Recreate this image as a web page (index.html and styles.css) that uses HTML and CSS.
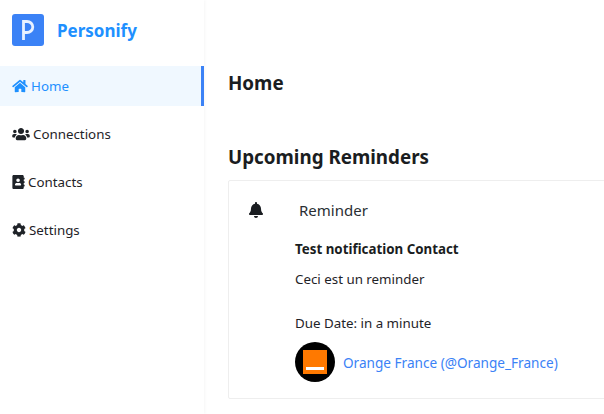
FILE: index.html
```html
<!DOCTYPE html>
<html lang="en">
<head>
<meta charset="utf-8">
<title>Personify</title>
<link rel="stylesheet" href="styles.css">
</head>
<body>
<div class="app">
  <aside class="sidebar">
    <div class="brand">
      <svg class="logo" viewBox="0 0 32 32"><rect width="32" height="32" rx="3" fill="#3b82f6"/><path d="M11.5 26V7.5h3.5a5.8 5.5 0 0 1 0 11h-3.5" fill="none" stroke="#eaf2ff" stroke-width="2.8"/></svg>
      <span class="brand-name">Personify</span>
    </div>
    <nav class="nav">
      <a class="nav-item active"><svg class="ico ico-home" viewBox="0 0 576 512"><path d="M280.37 148.26L96 300.11V464a16 16 0 0 0 16 16l112.06-.29a16 16 0 0 0 15.92-16V368a16 16 0 0 1 16-16h64a16 16 0 0 1 16 16v95.64a16 16 0 0 0 16 16.05L464 480a16 16 0 0 0 16-16V300L295.67 148.26a12.19 12.19 0 0 0-15.3 0zM571.6 251.47L488 182.56V44.05a12 12 0 0 0-12-12h-56a12 12 0 0 0-12 12v72.61L318.47 43a48 48 0 0 0-61 0L4.34 251.47a12 12 0 0 0-1.6 16.9l25.5 31A12 12 0 0 0 45.15 301l235.22-193.74a12.19 12.19 0 0 1 15.3 0L530.9 301a12 12 0 0 0 16.9-1.6l25.5-31a12 12 0 0 0-1.7-16.93z"/></svg>Home</a>
      <a class="nav-item"><svg class="ico ico-users" viewBox="0 0 640 512"><path d="M96 224c35.3 0 64-28.7 64-64s-28.7-64-64-64-64 28.7-64 64 28.7 64 64 64zm448 0c35.3 0 64-28.7 64-64s-28.7-64-64-64-64 28.7-64 64 28.7 64 64 64zm32 32h-64c-17.6 0-33.5 7.1-45.1 18.6 40.3 22.1 68.9 62 75.1 109.4h66c17.7 0 32-14.3 32-32v-32c0-35.3-28.7-64-64-64zm-256 0c61.9 0 112-50.1 112-112S381.9 32 320 32 208 82.1 208 144s50.1 112 112 112zm76.8 32h-8.3c-20.8 10-43.9 16-68.5 16s-47.6-6-68.5-16h-8.3C179.6 288 128 339.6 128 403.2V432c0 26.5 21.5 48 48 48h288c26.5 0 48-21.5 48-48v-28.8c0-63.6-51.6-115.2-115.2-115.2zm-223.7-13.4C161.5 263.1 145.6 256 128 256H64c-35.3 0-64 28.7-64 64v32c0 17.7 14.3 32 32 32h65.9c6.3-47.4 34.9-87.3 75.2-109.4z"/></svg>Connections</a>
      <a class="nav-item"><svg class="ico ico-book" viewBox="0 0 448 512"><path d="M436 160c6.6 0 12-5.4 12-12v-40c0-6.6-5.4-12-12-12h-20V48c0-26.5-21.5-48-48-48H48C21.5 0 0 21.5 0 48v416c0 26.5 21.5 48 48 48h320c26.5 0 48-21.5 48-48v-48h20c6.6 0 12-5.4 12-12v-40c0-6.6-5.4-12-12-12h-20v-64h20c6.6 0 12-5.4 12-12v-40c0-6.6-5.4-12-12-12h-20v-64h20zm-228-32c35.3 0 64 28.7 64 64s-28.7 64-64 64-64-28.7-64-64 28.7-64 64-64zm112 236.8c0 10.6-10 19.2-22.4 19.2H118.4C106 384 96 375.4 96 364.8v-19.2c0-31.8 30.1-57.6 67.2-57.6h5c12.3 5.1 25.7 8 39.8 8s27.6-2.9 39.8-8h5c37.1 0 67.2 25.8 67.2 57.6v19.2z"/></svg>Contacts</a>
      <a class="nav-item"><svg class="ico ico-cog" viewBox="0 0 512 512"><path d="M487.4 315.7l-42.6-24.6c4.3-23.2 4.3-47 0-70.2l42.6-24.6c4.9-2.8 7.1-8.6 5.5-14-11.1-35.6-30-67.8-54.7-94.6-3.8-4.1-10-5.1-14.8-2.3L380.8 110c-17.9-15.4-38.5-27.3-60.8-35.1V25.8c0-5.6-3.9-10.5-9.4-11.7-36.7-8.2-74.3-7.8-109.2 0-5.5 1.2-9.4 6.1-9.4 11.7V75c-22.2 7.9-42.8 19.8-60.8 35.1L88.7 85.5c-4.9-2.8-11-1.9-14.8 2.3-24.7 26.7-43.6 58.9-54.7 94.6-1.7 5.4.6 11.2 5.5 14L67.3 221c-4.3 23.2-4.3 47 0 70.2l-42.6 24.6c-4.9 2.8-7.1 8.6-5.5 14 11.1 35.6 30 67.8 54.7 94.6 3.8 4.1 10 5.1 14.8 2.3l42.6-24.6c17.9 15.4 38.5 27.3 60.8 35.1v49.2c0 5.6 3.9 10.5 9.4 11.7 36.7 8.2 74.3 7.8 109.2 0 5.5-1.2 9.4-6.1 9.4-11.7v-49.2c22.2-7.9 42.8-19.8 60.8-35.1l42.6 24.6c4.9 2.8 11 1.9 14.8-2.3 24.7-26.7 43.6-58.9 54.7-94.6 1.5-5.5-.7-11.3-5.6-14.1zM256 336c-44.1 0-80-35.9-80-80s35.9-80 80-80 80 35.9 80 80-35.9 80-80 80z"/></svg>Settings</a>
    </nav>
  </aside>
  <div class="content">
    <header class="topbar"></header>
    <main class="main">
      <h1 class="page-title">Home</h1>
      <h2 class="section-title">Upcoming Reminders</h2>
      <section class="card">
        <div class="card-head">
          <svg class="bell" viewBox="0 0 448 512"><path d="M224 512c35.32 0 63.97-28.65 63.97-64H160.03c0 35.35 28.65 64 63.97 64zm215.39-149.71c-19.32-20.76-55.47-51.99-55.47-154.29 0-77.7-54.48-139.9-127.94-155.16V32c0-17.67-14.32-32-31.98-32s-31.98 14.33-31.98 32v20.84C118.56 68.1 64.08 130.3 64.08 208c0 102.3-36.15 133.53-55.47 154.29-6 6.45-8.66 14.16-8.61 21.71.11 16.4 12.98 32 32.1 32h383.8c19.12 0 32-15.6 32.1-32 .05-7.55-2.61-15.27-8.61-21.71z"/></svg>
          <span class="card-label">Reminder</span>
        </div>
        <div class="card-body">
          <p class="line strong">Test notification Contact</p>
          <p class="line">Ceci est un reminder</p>
          <p class="line due">Due Date: in a minute</p>
          <div class="person">
            <svg class="avatar" viewBox="0 0 40 40"><circle cx="20" cy="20" r="20" fill="#000"/><rect x="8" y="8" width="24" height="24" fill="#ff7900"/><rect x="11" y="25" width="18" height="3" fill="#fff"/></svg>
            <a class="person-link">Orange France (@Orange_France)</a>
          </div>
        </div>
      </section>
    </main>
  </div>
</div>
</body>
</html>
```
FILE: styles.css
```css
html, body { margin: 0; padding: 0; height: 100%; overflow: hidden; background: #fff; }
body { font-family: "Noto Sans", "Open Sans", sans-serif; color: #1f2328; font-size: 13.33px; }
.app { display: flex; height: 414px; width: 800px; }
.sidebar { width: 204px; flex: none; background: #fff; box-shadow: 1px 0 3px rgba(0,0,0,.04); position: relative; z-index: 1; }
.brand { height: 66px; box-sizing: border-box; padding: 14px 0 0 12px; display: flex; align-items: flex-start; gap: 13px; }
.logo { width: 32px; height: 32px; display: block; flex: none; }
.brand-name { font-size: 17px; font-weight: 700; color: #1e90ff; line-height: 33px; }
.nav { display: flex; flex-direction: column; gap: 8px; }
.nav-item { height: 40px; display: flex; align-items: center; padding: 0 0 1px 12px; color: #1f2328; fill: #1f2328; font-size: 13.33px; box-sizing: border-box; }
.nav-item.active { background: #f0f8ff; border-right: 3px solid #3b82f6; color: #1e90ff; fill: #1e90ff; }
.ico { height: 14px; display: block; flex: none; margin-right: 3px; }
.ico-home { width: 16px; }
.ico-users { width: 18px; }
.ico-book { width: 13px; }
.ico-cog { width: 14px; }
.content { flex: 1; display: flex; flex-direction: column; background: #fff; }
.topbar { height: 46px; flex: none; box-shadow: 0 1px 3px rgba(0,0,0,.05); }
.main { padding: 24px 0 0 24px; background: #fff; flex: 1; }
.page-title { margin: 0; font-size: 18.8px; font-weight: 700; line-height: 26px; color: #1a1d21; }
.section-title { margin: 48px 0 0; font-size: 18.8px; font-weight: 700; line-height: 26px; color: #1a1d21; }
.card { margin-top: 10px; border: 1px solid #eee; height: 219px; box-sizing: border-box; border-radius: 2px; }
.card-head { display: flex; align-items: center; height: 58px; padding-left: 19px; }
.bell { width: 16px; height: 16px; fill: #1a1d21; flex: none; }
.card-label { margin-left: 35px; font-size: 15px; color: #2a2e33; }
.card-body { padding-left: 66px; }
.line { margin: 0; line-height: 20px; font-size: 13.33px; }
.strong { font-weight: 700; color: #1a1d21; }
.line + .line { margin-top: 10px; }
.line.due { margin-top: 24px; }
.person { display: flex; align-items: center; gap: 8px; margin-top: 9px; }
.avatar { width: 40px; height: 40px; flex: none; }
.person-link { color: #3b82f6; font-size: 13.6px; }
```
